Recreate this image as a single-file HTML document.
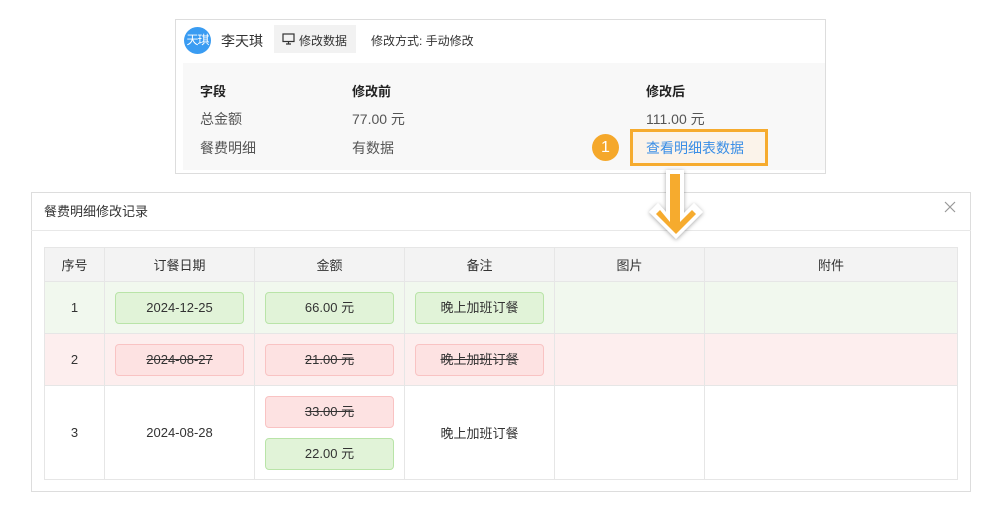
<!DOCTYPE html>
<html><head><meta charset="utf-8"><style>
*{margin:0;padding:0;box-sizing:border-box}
body{width:1000px;height:507px;background:#fff;font-family:"Liberation Sans","Noto Sans CJK SC",sans-serif;position:relative;overflow:hidden;color:#333}
.abs{position:absolute}
.card{left:175px;top:19px;width:651px;height:155px;border:1px solid #ddd;background:#fff}
.grey{left:183px;top:63px;width:642px;height:107px;background:#f8f8f8}
.t{position:absolute;font-size:13px;white-space:nowrap}
.v{font-size:14px;color:#555}
.dlg{left:31px;top:192px;width:940px;height:300px;border:1px solid #ddd;background:#fff}
table{position:absolute;left:44px;top:247px;border-collapse:collapse;font-size:13px;color:#333;table-layout:fixed;width:913px}
td,th{border:1px solid #e6e6e6;text-align:center;font-weight:normal;padding:0}
th{background:#f3f3f3;height:34px}
.g td{background:#f1f8ee}
.r td{background:#fdeeee}
.tag{display:inline-block;width:129px;height:32px;line-height:30px;border-radius:4px;font-size:13px}
.tg{background:#e1f3d8;border:1px solid #b9e4a8}
.tr{background:#fde2e2;border:1px solid #f9c3c3;text-decoration:line-through}
</style></head><body>
<div class="abs card"></div>
<div class="abs" style="left:184px;top:27px;width:27px;height:27px;border-radius:50%;background:#3a9cf2;color:#fff;font-size:12px;line-height:27px;text-align:center;letter-spacing:-1px">天琪</div>
<div class="t" style="left:221px;top:31px;font-size:14px">李天琪</div>
<div class="abs" style="left:274px;top:25px;width:82px;height:28px;background:#f2f2f2"></div>
<svg class="abs" style="left:282px;top:33px" width="13" height="12" viewBox="0 0 13 12"><rect x="1" y="1" width="11" height="7.5" fill="none" stroke="#333" stroke-width="1.2"/><path d="M4 11h5M6.5 8.5v2.5" stroke="#333" stroke-width="1.2"/></svg>
<div class="t" style="left:299px;top:32px;font-size:12px">修改数据</div>
<div class="t" style="left:371px;top:32px;font-size:12px">修改方式: 手动修改</div>
<div class="abs grey"></div>
<div class="t" style="left:200px;top:81px;font-weight:bold;color:#222">字段</div>
<div class="t" style="left:352px;top:81px;font-weight:bold;color:#222">修改前</div>
<div class="t" style="left:646px;top:81px;font-weight:bold;color:#222">修改后</div>
<div class="t v" style="left:200px;top:109px">总金额</div>
<div class="t v" style="left:352px;top:109px">77.00 元</div>
<div class="t v" style="left:646px;top:109px">111.00 元</div>
<div class="t v" style="left:200px;top:138px">餐费明细</div>
<div class="t v" style="left:352px;top:138px">有数据</div>
<div class="abs" style="left:592px;top:134px;width:27px;height:27px;border-radius:50%;background:#f5a82b;color:#fff;font-size:16px;line-height:27px;text-align:center">1</div>
<div class="abs" style="left:630px;top:129px;width:138px;height:37px;border:3px solid #f6ab2e;background:#fbf3ea"></div>
<div class="t" style="left:646px;top:138px;color:#3a8ee6;font-size:14px">查看明细表数据</div>

<div class="abs dlg"></div>
<div class="t" style="left:44px;top:201px;font-size:13px">餐费明细修改记录</div>
<svg class="abs" style="left:944px;top:201px" width="12" height="12"><path d="M1 1L11 11M11 1L1 11" stroke="#999" stroke-width="1.2"/></svg>
<div class="abs" style="left:31px;top:230px;width:940px;height:1px;background:#e8e8e8"></div>
<table>
<colgroup><col style="width:60px"><col style="width:150px"><col style="width:150px"><col style="width:150px"><col style="width:150px"><col style="width:253px"></colgroup>
<tr><th>序号</th><th>订餐日期</th><th>金额</th><th>备注</th><th>图片</th><th>附件</th></tr>
<tr class="g" style="height:52px"><td>1</td><td><span class="tag tg">2024-12-25</span></td><td><span class="tag tg">66.00 元</span></td><td><span class="tag tg">晚上加班订餐</span></td><td></td><td></td></tr>
<tr class="r" style="height:52px"><td>2</td><td><span class="tag tr">2024-08-27</span></td><td><span class="tag tr">21.00 元</span></td><td><span class="tag tr">晚上加班订餐</span></td><td></td><td></td></tr>
<tr style="height:94px"><td>3</td><td>2024-08-28</td><td><span class="tag tr">33.00 元</span><br><span class="tag tg" style="margin-top:10px">22.00 元</span></td><td>晚上加班订餐</td><td></td><td></td></tr>
</table>
<svg class="abs" style="left:640px;top:166px" width="80" height="80" viewBox="640 166 80 80">
<defs><filter id="s" x="-50%" y="-50%" width="200%" height="200%"><feDropShadow dx="0" dy="1" stdDeviation="2" flood-color="#000" flood-opacity="0.35"/></filter></defs>
<g filter="url(#s)"><path d="M666 170h18v43l10-10 9 9-27 27-27-27 9-9 8 9z" fill="#fff"/></g>
<path d="M670 174h10v48l12-12 4 4-20 20-20-20 4-4 10 12z" fill="#f6ab2e"/>
</svg>
</body></html>
